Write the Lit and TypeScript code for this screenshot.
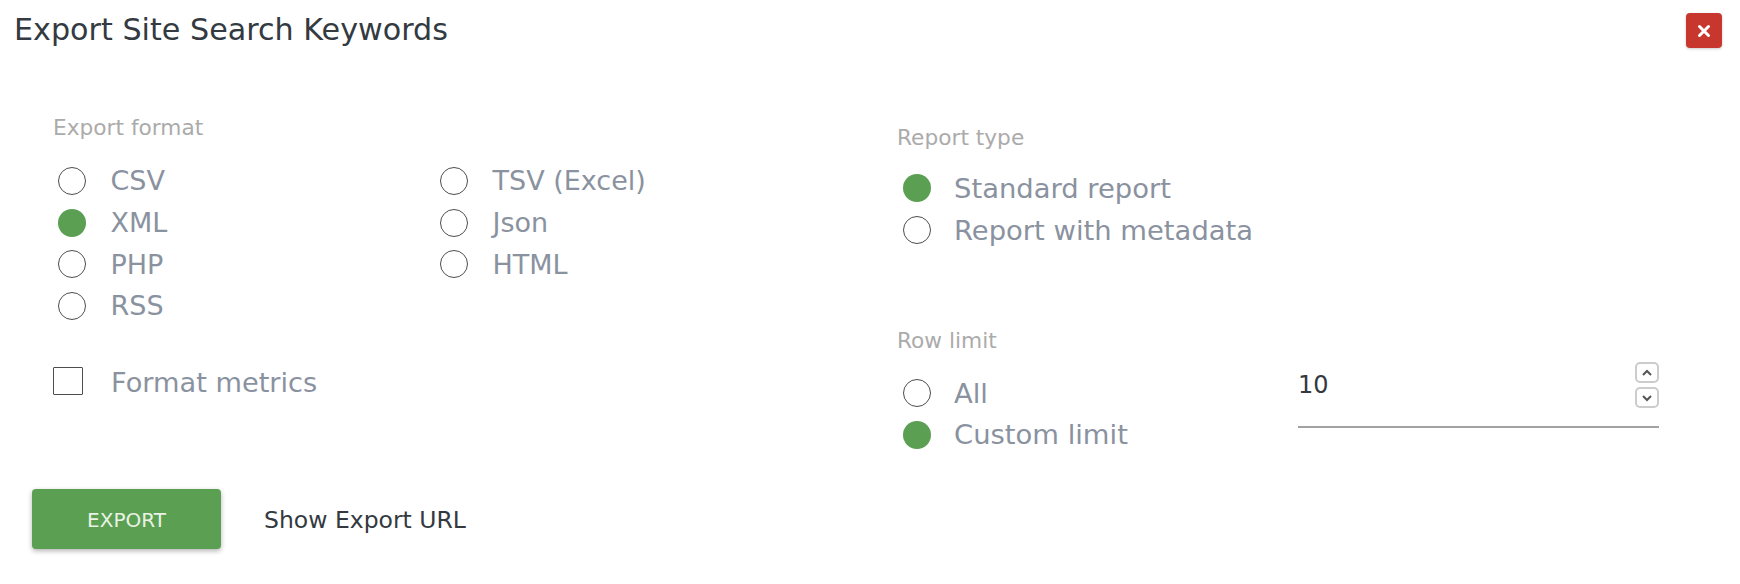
import { LitElement, html, css } from "lit";
import { customElement } from "lit/decorators.js";

@customElement("app-root")
export class AppRoot extends LitElement {
  static styles = css`
    :host { display: block; width: 1740px; height: 584px; background: #fff; font-family: "DejaVu Sans", sans-serif; overflow: hidden; }
    .head { display: flex; justify-content: space-between; align-items: flex-start; padding: 14px 18px 0 14px; height: 50px; box-sizing: border-box; }
    h1 { margin: 0; font-size: 30.2px; font-weight: 400; line-height: 32px; color: #333a41; }
    .close { width: 36px; height: 35px; margin-top: -1px; border: 0; padding: 0; border-radius: 4px; background: #c8372d; display: grid; place-items: center; box-shadow: 0 1px 3px rgba(0,0,0,.2); }
    .main { display: grid; grid-template-columns: 897px 1fr; }
    .left { padding: 64px 0 0 53px; }
    .side { padding: 74px 0 0 0; }
    .label { font-size: 21.7px; line-height: 28px; color: #ababab; }
    .formats { display: grid; grid-template-columns: 382px 1fr; margin: 18px 0 0 5px; }
    .opt { display: flex; align-items: center; height: 41.7px; font-size: 27px; color: #8a929f; white-space: nowrap; }
    .radio { width: 28px; height: 28px; box-sizing: border-box; border: 1.8px solid #4d4d4d; border-radius: 50%; margin-right: 24.5px; flex: none; background: #fff; }
    .radio.tight { margin-right: 23px; }
    .radio.on { border: 0; background: #5b9f53; }
    .side .opt { font-size: 27.4px; }
    .check { display: flex; align-items: center; margin-top: 39px; font-size: 27.2px; color: #8a929f; line-height: 34px; }
    .box { width: 30px; height: 28px; margin-top: -3px; box-sizing: border-box; border: 1.8px solid #4d4d4d; border-radius: 1px; margin-right: 28px; }
    .types { margin: 15.5px 0 0 6px; }
    .limit { margin-top: 76.5px; }
    .limit-row { display: grid; grid-template-columns: 401px 361px; }
    .limits { margin: 17px 0 0 6px; }
    .num { height: 75px; box-sizing: border-box; border-bottom: 2px solid #a2a2a2; margin-top: -2px; display: flex; justify-content: space-between; font-size: 24px; line-height: 32px; color: #33393f; padding-top: 16px; }
    .spin { display: flex; flex-direction: column; gap: 4px; margin-top: -7px; }
    .spin span { width: 24px; height: 21px; box-sizing: border-box; border: 2px solid #ccc; border-radius: 5px; display: grid; place-items: center; }
    .foot { display: flex; align-items: center; padding: 0 0 0 32px; margin-top: 33px; }
    .export { width: 189px; height: 60px; border: 0; border-radius: 4px; background: #5b9f53; color: #e9f3e5; font: 400 20px "DejaVu Sans", sans-serif; box-shadow: 0 2px 5px rgba(0,0,0,.3); padding: 2px 0 0; }
    .url { margin-left: 43px; padding-top: 3px; font-size: 23.5px; color: #33393f; }
  `;

  private opt(label: string, on = false, tight = false) {
    return html`<div class="opt"><span class="radio ${on ? "on" : ""} ${tight ? "tight" : ""}"></span>${label}</div>`;
  }

  render() {
    return html`
      <div class="head">
        <h1>Export Site Search Keywords</h1>
        <button class="close" aria-label="Close">
          <svg width="16" height="16" viewBox="0 0 16 16"><path d="M3.5 3.5l9 9M12.5 3.5l-9 9" stroke="#fff" stroke-width="3" stroke-linecap="round"/></svg>
        </button>
      </div>
      <div class="main">
        <div class="left">
          <div class="label">Export format</div>
          <div class="formats">
            <div>${this.opt("CSV")}${this.opt("XML", true)}${this.opt("PHP")}${this.opt("RSS")}</div>
            <div>${this.opt("TSV (Excel)")}${this.opt("Json")}${this.opt("HTML")}</div>
          </div>
          <div class="check"><span class="box"></span>Format metrics</div>
        </div>
        <div class="side">
          <div class="label">Report type</div>
          <div class="types">${this.opt("Standard report", true, true)}${this.opt("Report with metadata", false, true)}</div>
          <div class="limit">
            <div class="label">Row limit</div>
            <div class="limit-row">
              <div class="limits">${this.opt("All", false, true)}${this.opt("Custom limit", true, true)}</div>
              <div class="num"><span>10</span>
                <div class="spin">
                  <span><svg width="12" height="8" viewBox="0 0 12 8"><path d="M2 6l4-4 4 4" fill="none" stroke="#555" stroke-width="2"/></svg></span>
                  <span><svg width="12" height="8" viewBox="0 0 12 8"><path d="M2 2l4 4 4-4" fill="none" stroke="#555" stroke-width="2"/></svg></span>
                </div>
              </div>
            </div>
          </div>
        </div>
      </div>
      <div class="foot">
        <button class="export">EXPORT</button>
        <span class="url">Show Export URL</span>
      </div>
    `;
  }
}
